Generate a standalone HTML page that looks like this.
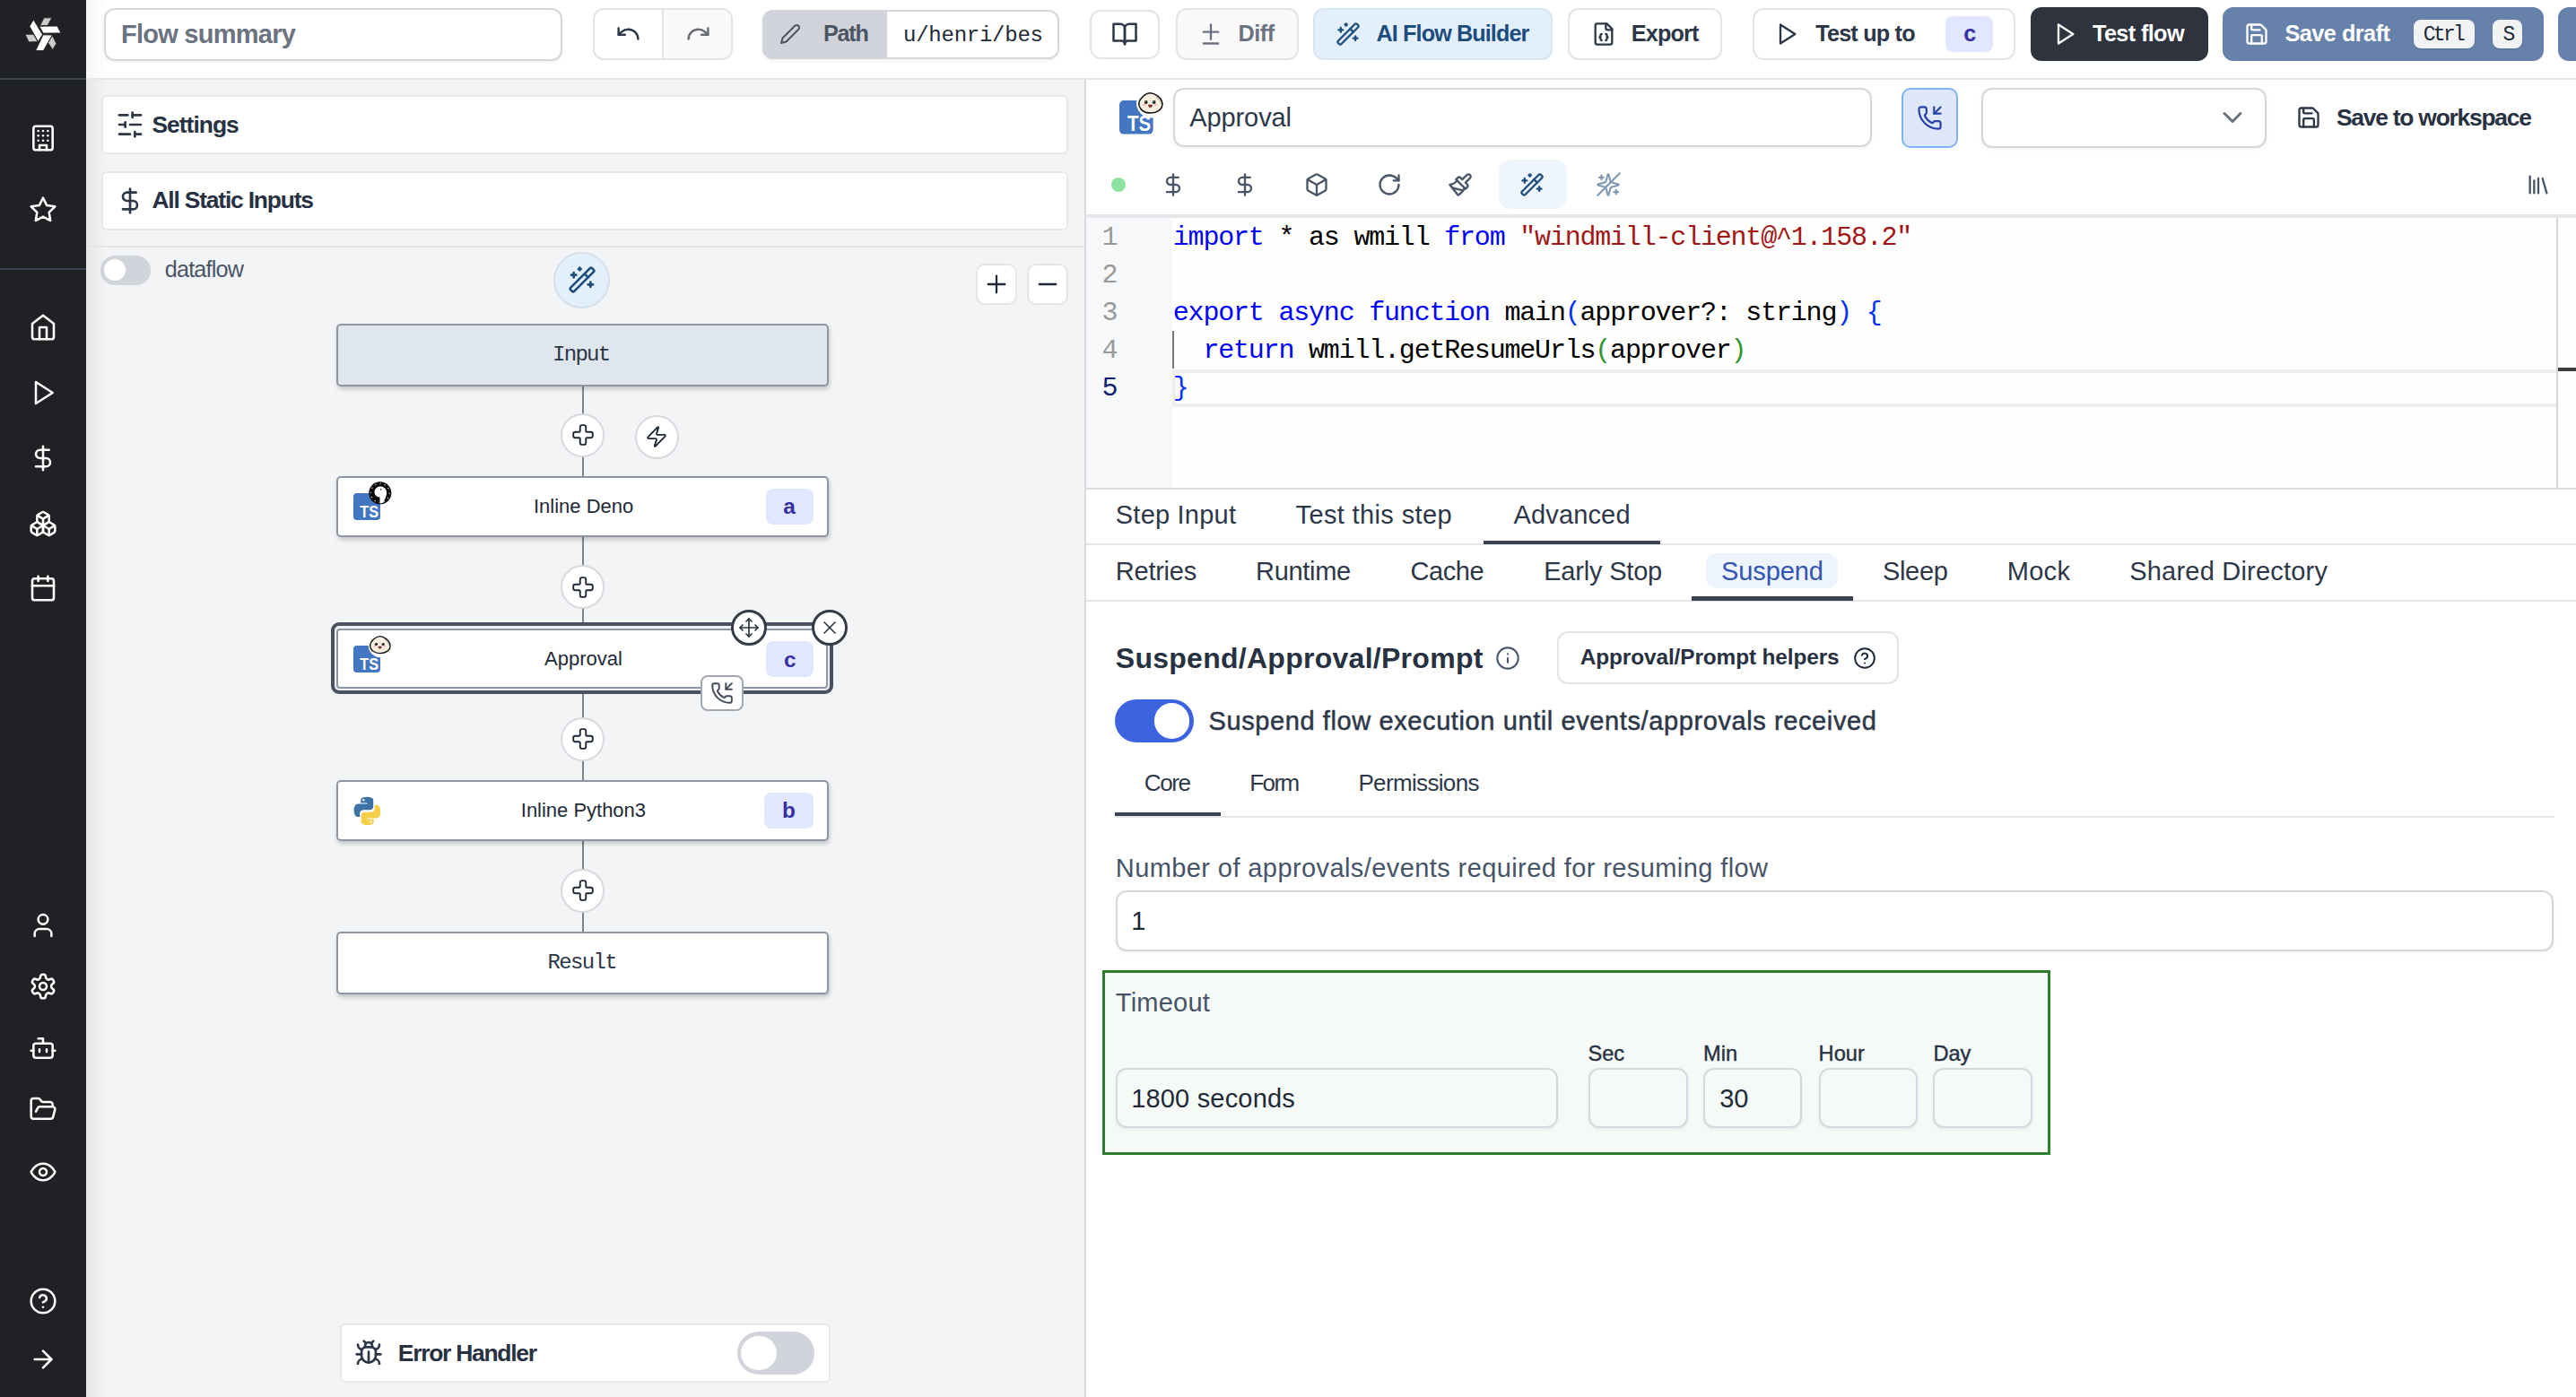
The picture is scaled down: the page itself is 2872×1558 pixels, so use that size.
<!DOCTYPE html>
<html><head><meta charset="utf-8"><title>Flow editor</title>
<style>
html,body{margin:0;padding:0;width:2872px;height:1558px;overflow:hidden;background:#fff}
.b,.t,.i,.r{position:absolute;box-sizing:border-box}
.t{white-space:pre}
.i{overflow:visible}
@media (max-width:2000px){html{zoom:0.5}}
</style></head><body>
<div class="b" style="left:0.00px;top:0.00px;width:2872.00px;height:1558.00px;background:#fff"></div>
<div class="b" style="left:96.00px;top:88.00px;width:1113.00px;height:1470.00px;background:#f3f4f6"></div>
<div class="b" style="left:1209.00px;top:88.00px;width:2.00px;height:1470.00px;background:#d9dbe0"></div>
<div class="b" style="left:96.00px;top:88.00px;width:24.00px;height:1470.00px;background:linear-gradient(to right, rgba(0,0,0,.055), rgba(0,0,0,0))"></div>
<div class="b" style="left:96.00px;top:0.00px;width:24.00px;height:87.00px;background:linear-gradient(to right, rgba(0,0,0,.035), rgba(0,0,0,0))"></div>
<div class="b" style="left:0.00px;top:0.00px;width:96.00px;height:1558.00px;background:#202125"></div>
<div class="b" style="left:0.00px;top:87.00px;width:96.00px;height:2.00px;background:#3a4352"></div>
<div class="b" style="left:0.00px;top:299.00px;width:96.00px;height:2.00px;background:#3a4352"></div>
<svg class="i" style="left:0;top:0;width:96.00px;height:88.00px" viewBox="0 0 48 44">
<g stroke="#202125" stroke-width="0.45" stroke-linejoin="miter">
<polygon fill="#cbcbcb" points="13.95,19.1 18.7,19.1 21.12,23.29 16.04,23.45"/>
<polygon fill="#cbcbcb" points="24.5,9.92 28.93,9.92 26.51,14.27 22.24,14.35"/>
<polygon fill="#cbcbcb" points="29.17,19.74 31.43,24.26 29.33,27.8 26.76,23.77"/>
<polygon fill="#ffffff" points="18.7,10.96 16.44,14.67 21.28,23.21 23.69,19.26"/>
<polygon fill="#ffffff" points="21.92,14.59 31.91,14.51 34.0,18.46 24.02,18.54"/>
<polygon fill="#ffffff" points="24.02,19.42 29.17,19.5 24.18,28.28 19.83,28.28"/>
</g></svg>
<svg class="i" style="left:32.00px;top:137.70px;width:32.00px;height:32.00px;" viewBox="0 0 24 24" fill="none" stroke="#ffffff" stroke-width="1.9" stroke-linecap="round" stroke-linejoin="round"><rect width="16" height="20" x="4" y="2" rx="2" ry="2"/><path d="M9 22v-4h6v4"/><path d="M8 6h.01"/><path d="M16 6h.01"/><path d="M12 6h.01"/><path d="M12 10h.01"/><path d="M12 14h.01"/><path d="M16 10h.01"/><path d="M16 14h.01"/><path d="M8 10h.01"/><path d="M8 14h.01"/></svg>
<svg class="i" style="left:32.00px;top:218.00px;width:32.00px;height:32.00px;" viewBox="0 0 24 24" fill="none" stroke="#ffffff" stroke-width="1.9" stroke-linecap="round" stroke-linejoin="round"><polygon points="12 2 15.09 8.26 22 9.27 17 14.14 18.18 21.02 12 17.77 5.82 21.02 7 14.14 2 9.27 8.91 8.26 12 2"/></svg>
<svg class="i" style="left:32.00px;top:349.00px;width:32.00px;height:32.00px;" viewBox="0 0 24 24" fill="none" stroke="#ffffff" stroke-width="1.9" stroke-linecap="round" stroke-linejoin="round"><path d="m3 9 9-7 9 7v11a2 2 0 0 1-2 2H5a2 2 0 0 1-2-2z"/><polyline points="9 22 9 12 15 12 15 22"/></svg>
<svg class="i" style="left:32.00px;top:422.00px;width:32.00px;height:32.00px;" viewBox="0 0 24 24" fill="none" stroke="#ffffff" stroke-width="1.9" stroke-linecap="round" stroke-linejoin="round"><polygon points="6 3 20 12 6 21 6 3"/></svg>
<svg class="i" style="left:32.00px;top:495.40px;width:32.00px;height:32.00px;" viewBox="0 0 24 24" fill="none" stroke="#ffffff" stroke-width="1.9" stroke-linecap="round" stroke-linejoin="round"><line x1="12" x2="12" y1="2" y2="22"/><path d="M17 5H9.5a3.5 3.5 0 0 0 0 7h5a3.5 3.5 0 0 1 0 7H6"/></svg>
<svg class="i" style="left:32.00px;top:568.00px;width:32.00px;height:32.00px;" viewBox="0 0 24 24" fill="none" stroke="#ffffff" stroke-width="1.9" stroke-linecap="round" stroke-linejoin="round"><path d="M2.97 12.92A2 2 0 0 0 2 14.63v3.24a2 2 0 0 0 .97 1.71l3 1.8a2 2 0 0 0 2.06 0L12 19v-5.5l-5-3-4.03 2.42Z"/><path d="m7 16.5-4.74-2.85"/><path d="m7 16.5 5-3"/><path d="M7 16.5v5.17"/><path d="M12 13.5V19l3.97 2.38a2 2 0 0 0 2.06 0l3-1.8a2 2 0 0 0 .97-1.71v-3.24a2 2 0 0 0-.97-1.71L17 10.5l-5 3Z"/><path d="m17 16.5-5-3"/><path d="m17 16.5 4.74-2.85"/><path d="M17 16.5v5.17"/><path d="M7.97 4.42A2 2 0 0 0 7 6.13v4.37l5 3 5-3V6.13a2 2 0 0 0-.97-1.71l-3-1.8a2 2 0 0 0-2.06 0l-3 1.8Z"/><path d="M12 8 7.26 5.15"/><path d="m12 8 4.74-2.85"/><path d="M12 13.5V8"/></svg>
<svg class="i" style="left:32.00px;top:640.00px;width:32.00px;height:32.00px;" viewBox="0 0 24 24" fill="none" stroke="#ffffff" stroke-width="1.9" stroke-linecap="round" stroke-linejoin="round"><rect width="18" height="18" x="3" y="4" rx="2" ry="2"/><line x1="16" x2="16" y1="2" y2="6"/><line x1="8" x2="8" y1="2" y2="6"/><line x1="3" x2="21" y1="10" y2="10"/></svg>
<svg class="i" style="left:32.00px;top:1016.40px;width:32.00px;height:32.00px;" viewBox="0 0 24 24" fill="none" stroke="#ffffff" stroke-width="1.9" stroke-linecap="round" stroke-linejoin="round"><path d="M19 21v-2a4 4 0 0 0-4-4H9a4 4 0 0 0-4 4v2"/><circle cx="12" cy="7" r="4"/></svg>
<svg class="i" style="left:32.00px;top:1084.40px;width:32.00px;height:32.00px;" viewBox="0 0 24 24" fill="none" stroke="#ffffff" stroke-width="1.9" stroke-linecap="round" stroke-linejoin="round"><path d="M12.22 2h-.44a2 2 0 0 0-2 2v.18a2 2 0 0 1-1 1.73l-.43.25a2 2 0 0 1-2 0l-.15-.08a2 2 0 0 0-2.73.73l-.22.38a2 2 0 0 0 .73 2.73l.15.1a2 2 0 0 1 1 1.72v.51a2 2 0 0 1-1 1.74l-.15.09a2 2 0 0 0-.73 2.73l.22.38a2 2 0 0 0 2.73.73l.15-.08a2 2 0 0 1 2 0l.43.25a2 2 0 0 1 1 1.73V20a2 2 0 0 0 2 2h.44a2 2 0 0 0 2-2v-.18a2 2 0 0 1 1-1.73l.43-.25a2 2 0 0 1 2 0l.15.08a2 2 0 0 0 2.73-.73l.22-.39a2 2 0 0 0-.73-2.73l-.15-.08a2 2 0 0 1-1-1.74v-.5a2 2 0 0 1 1-1.74l.15-.09a2 2 0 0 0 .73-2.73l-.22-.38a2 2 0 0 0-2.73-.73l-.15.08a2 2 0 0 1-2 0l-.43-.25a2 2 0 0 1-1-1.73V4a2 2 0 0 0-2-2z"/><circle cx="12" cy="12" r="3"/></svg>
<svg class="i" style="left:32.00px;top:1153.40px;width:32.00px;height:32.00px;" viewBox="0 0 24 24" fill="none" stroke="#ffffff" stroke-width="1.9" stroke-linecap="round" stroke-linejoin="round"><path d="M12 8V4H8"/><rect width="16" height="12" x="4" y="8" rx="2"/><path d="M2 14h2"/><path d="M20 14h2"/><path d="M15 13v2"/><path d="M9 13v2"/></svg>
<svg class="i" style="left:32.00px;top:1221.40px;width:32.00px;height:32.00px;" viewBox="0 0 24 24" fill="none" stroke="#ffffff" stroke-width="1.9" stroke-linecap="round" stroke-linejoin="round"><path d="m6 14 1.5-2.9A2 2 0 0 1 9.24 10H20a2 2 0 0 1 1.94 2.5l-1.54 6a2 2 0 0 1-1.95 1.5H4a2 2 0 0 1-2-2V5a2 2 0 0 1 2-2h3.9a2 2 0 0 1 1.69.9l.81 1.2a2 2 0 0 0 1.67.9H18a2 2 0 0 1 2 2v2"/></svg>
<svg class="i" style="left:32.00px;top:1290.60px;width:32.00px;height:32.00px;" viewBox="0 0 24 24" fill="none" stroke="#ffffff" stroke-width="1.9" stroke-linecap="round" stroke-linejoin="round"><path d="M2 12s3-7 10-7 10 7 10 7-3 7-10 7-10-7-10-7Z"/><circle cx="12" cy="12" r="3"/></svg>
<svg class="i" style="left:32.00px;top:1435.40px;width:32.00px;height:32.00px;" viewBox="0 0 24 24" fill="none" stroke="#ffffff" stroke-width="1.9" stroke-linecap="round" stroke-linejoin="round"><circle cx="12" cy="12" r="10"/><path d="M9.09 9a3 3 0 0 1 5.83 1c0 2-3 3-3 3"/><path d="M12 17h.01"/></svg>
<svg class="i" style="left:32.00px;top:1500.00px;width:32.00px;height:32.00px;" viewBox="0 0 24 24" fill="none" stroke="#ffffff" stroke-width="1.9" stroke-linecap="round" stroke-linejoin="round"><path d="M5 12h14"/><path d="m12 5 7 7-7 7"/></svg>
<div class="b" style="left:96.00px;top:87.00px;width:2776.00px;height:2.00px;background:#e5e7eb"></div>
<div class="b" style="left:116.00px;top:8.80px;width:510.80px;height:59.20px;border:2.00px solid #d4d7dd;border-radius:12.00px;background:#fff;box-shadow:0 2.00px 4.00px rgba(0,0,0,.05)"></div>
<div class="t" style="left:135.00px;top:23.65px;font-size:29.00px;line-height:29.00px;color:#6b7280;font-family:'Liberation Sans', sans-serif;font-weight:700;letter-spacing:-0.748px;">Flow summary</div>
<div class="b" style="left:660.80px;top:8.80px;width:156.20px;height:58.70px;border:2.00px solid #e2e4e9;border-radius:12.00px;background:#fff;overflow:hidden"></div>
<div class="b" style="left:738.80px;top:10.80px;width:76.20px;height:54.70px;background:#fafafa;border-radius:0 10.00px 10.00px 0"></div>
<div class="b" style="left:738.00px;top:8.80px;width:2.00px;height:58.70px;background:#e2e4e9"></div>
<svg class="i" style="left:685.50px;top:23.30px;width:29.00px;height:29.00px;" viewBox="0 0 24 24" fill="none" stroke="#2d3748" stroke-width="2" stroke-linecap="round" stroke-linejoin="round"><path d="M3 7v6h6"/><path d="M21 17a9 9 0 0 0-9-9 9 9 0 0 0-6 2.3L3 13"/></svg>
<svg class="i" style="left:763.50px;top:23.30px;width:29.00px;height:29.00px;" viewBox="0 0 24 24" fill="none" stroke="#666b73" stroke-width="2" stroke-linecap="round" stroke-linejoin="round"><path d="M21 7v6h-6"/><path d="M3 17a9 9 0 0 1 9-9 9 9 0 0 1 6 2.3l3 2.7"/></svg>
<div class="b" style="left:850.00px;top:10.50px;width:330.80px;height:55.50px;border:2.00px solid #d4d7dd;border-radius:12.00px;background:#fff;box-shadow:0 2.00px 4.00px rgba(0,0,0,.05)"></div>
<div class="b" style="left:850.00px;top:10.50px;width:139.20px;height:55.50px;background:#d1d5db;border-radius:12.00px 0 0 12.00px"></div>
<svg class="i" style="left:869.20px;top:25.80px;width:24.00px;height:24.00px;" viewBox="0 0 24 24" fill="none" stroke="#4b5563" stroke-width="2" stroke-linecap="round" stroke-linejoin="round"><path d="M17 3a2.85 2.83 0 1 1 4 4L7.5 20.5 2 22l1.5-5.5Z"/></svg>
<div class="t" style="left:918.00px;top:24.87px;font-size:25.20px;line-height:25.20px;color:#4b5563;font-family:'Liberation Sans', sans-serif;font-weight:700;letter-spacing:-1.272px;">Path</div>
<div class="t" style="left:1007.00px;top:27.80px;font-size:24.00px;line-height:24.00px;color:#1f2937;font-family:'Liberation Mono', monospace;font-weight:400;letter-spacing:-0.243px;">u/henri/bes</div>
<div class="b" style="left:1214.50px;top:10.50px;width:78.50px;height:55.30px;border:2.00px solid #e2e4e9;border-radius:12.00px;background:#fff"></div>
<svg class="i" style="left:1238.80px;top:22.80px;width:30.00px;height:30.00px;" viewBox="0 0 24 24" fill="none" stroke="#2d3748" stroke-width="2" stroke-linecap="round" stroke-linejoin="round"><path d="M2 3h6a4 4 0 0 1 4 4v14a3 3 0 0 0-3-3H2z"/><path d="M22 3h-6a4 4 0 0 0-4 4v14a3 3 0 0 1 3-3h7z"/></svg>
<div class="b" style="left:1310.50px;top:8.80px;width:137.00px;height:58.70px;border:2.00px solid #e2e4e9;border-radius:12.00px;background:#f9f9fa"></div>
<svg class="i" style="left:1336.00px;top:23.80px;width:28.00px;height:28.00px;" viewBox="0 0 24 24" fill="none" stroke="#6b7280" stroke-width="2" stroke-linecap="round" stroke-linejoin="round"><path d="M12 3v14"/><path d="M5 10h14"/><path d="M5 21h14"/></svg>
<div class="t" style="left:1380.50px;top:24.87px;font-size:25.20px;line-height:25.20px;color:#6b7280;font-family:'Liberation Sans', sans-serif;font-weight:700;letter-spacing:-0.464px;">Diff</div>
<div class="b" style="left:1464.00px;top:8.80px;width:267.20px;height:58.70px;border:2.00px solid #d6e6f5;border-radius:12.00px;background:#e3f0fc"></div>
<svg class="i" style="left:1489.20px;top:23.80px;width:28.00px;height:28.00px;" viewBox="0 0 24 24" fill="none" stroke="#1e4c7c" stroke-width="2" stroke-linecap="round" stroke-linejoin="round"><path d="m21.64 3.64-1.28-1.28a1.21 1.21 0 0 0-1.72 0L2.36 18.64a1.21 1.21 0 0 0 0 1.72l1.28 1.28a1.2 1.2 0 0 0 1.72 0L21.64 5.36a1.2 1.2 0 0 0 0-1.72"/><path d="m14 7 3 3"/><path d="M5 6v4"/><path d="M19 14v4"/><path d="M10 2v2"/><path d="M7 8H3"/><path d="M21 16h-4"/><path d="M11 3H9"/></svg>
<div class="t" style="left:1534.50px;top:24.87px;font-size:25.20px;line-height:25.20px;color:#1e4c7c;font-family:'Liberation Sans', sans-serif;font-weight:700;letter-spacing:-0.886px;">AI Flow Builder</div>
<div class="b" style="left:1748.00px;top:8.80px;width:172.00px;height:58.70px;border:2.00px solid #e2e4e9;border-radius:12.00px;background:#fff"></div>
<svg class="i" style="left:1774.00px;top:23.80px;width:28.00px;height:28.00px;" viewBox="0 0 24 24" fill="none" stroke="#2d3748" stroke-width="2" stroke-linecap="round" stroke-linejoin="round"><path d="M15 2H6a2 2 0 0 0-2 2v16a2 2 0 0 0 2 2h12a2 2 0 0 0 2-2V7Z"/><path d="M14 2v4a2 2 0 0 0 2 2h4"/><path d="M10 12a1 1 0 0 0-1 1v1a1 1 0 0 1-1 1 1 1 0 0 1 1 1v1a1 1 0 0 0 1 1"/><path d="M14 18a1 1 0 0 0 1-1v-1a1 1 0 0 1 1-1 1 1 0 0 1-1-1v-1a1 1 0 0 0-1-1"/></svg>
<div class="t" style="left:1818.80px;top:24.87px;font-size:25.20px;line-height:25.20px;color:#2d3748;font-family:'Liberation Sans', sans-serif;font-weight:700;letter-spacing:-0.823px;">Export</div>
<div class="b" style="left:1953.80px;top:8.80px;width:293.70px;height:58.70px;border:2.00px solid #e2e4e9;border-radius:12.00px;background:#fff"></div>
<svg class="i" style="left:1978.00px;top:23.80px;width:28.00px;height:28.00px;" viewBox="0 0 24 24" fill="none" stroke="#2d3748" stroke-width="2" stroke-linecap="round" stroke-linejoin="round"><polygon points="6 3 20 12 6 21 6 3"/></svg>
<div class="t" style="left:2024.20px;top:24.87px;font-size:25.20px;line-height:25.20px;color:#2d3748;font-family:'Liberation Sans', sans-serif;font-weight:700;letter-spacing:-0.789px;">Test up to</div>
<div class="b" style="left:2169.20px;top:18.00px;width:52.60px;height:40.00px;background:#e0e7ff;border-radius:8.00px"></div>
<div class="t" style="left:2189.20px;top:24.87px;font-size:25.20px;line-height:25.20px;color:#3730a3;font-family:'Liberation Sans', sans-serif;font-weight:700;letter-spacing:0.000px;">c</div>
<div class="b" style="left:2264.00px;top:8.00px;width:197.80px;height:60.00px;background:#2e333e;border-radius:12.00px"></div>
<svg class="i" style="left:2287.80px;top:23.80px;width:28.00px;height:28.00px;" viewBox="0 0 24 24" fill="none" stroke="#ffffff" stroke-width="2" stroke-linecap="round" stroke-linejoin="round"><polygon points="6 3 20 12 6 21 6 3"/></svg>
<div class="t" style="left:2333.00px;top:24.87px;font-size:25.20px;line-height:25.20px;color:#ffffff;font-family:'Liberation Sans', sans-serif;font-weight:700;letter-spacing:-0.601px;">Test flow</div>
<div class="b" style="left:2478.00px;top:8.00px;width:357.50px;height:60.00px;background:#6681aa;border-radius:12.00px"></div>
<svg class="i" style="left:2501.50px;top:23.80px;width:28.00px;height:28.00px;" viewBox="0 0 24 24" fill="none" stroke="#ffffff" stroke-width="2" stroke-linecap="round" stroke-linejoin="round"><path d="M15.2 3a2 2 0 0 1 1.4.6l3.8 3.8a2 2 0 0 1 .6 1.4V19a2 2 0 0 1-2 2H5a2 2 0 0 1-2-2V5a2 2 0 0 1 2-2z"/><path d="M17 21v-7a1 1 0 0 0-1-1H8a1 1 0 0 0-1 1v7"/><path d="M7 3v4a1 1 0 0 0 1 1h7"/></svg>
<div class="t" style="left:2547.50px;top:24.87px;font-size:25.20px;line-height:25.20px;color:#ffffff;font-family:'Liberation Sans', sans-serif;font-weight:700;letter-spacing:-0.485px;">Save draft</div>
<div class="b" style="left:2691.00px;top:22.00px;width:67.80px;height:32.00px;background:#f1f2f4;border-radius:8.00px;box-shadow:0 1.00px 2.00px rgba(0,0,0,.15)"></div>
<div class="t" style="left:2701.80px;top:28.37px;font-size:23.00px;line-height:23.00px;color:#1f2937;font-family:'Liberation Mono', monospace;font-weight:400;letter-spacing:-2.735px;">Ctrl</div>
<div class="b" style="left:2778.80px;top:22.00px;width:33.00px;height:32.00px;background:#f1f2f4;border-radius:8.00px;box-shadow:0 1.00px 2.00px rgba(0,0,0,.15)"></div>
<div class="t" style="left:2790.50px;top:28.37px;font-size:23.00px;line-height:23.00px;color:#1f2937;font-family:'Liberation Mono', monospace;font-weight:400;letter-spacing:0.000px;">S</div>
<div class="b" style="left:2852.00px;top:8.00px;width:40.00px;height:60.00px;background:#6681aa;border-radius:12.00px"></div>
<div class="b" style="left:113.00px;top:106.20px;width:1078.00px;height:65.80px;background:#fff;border:2.00px solid #e5e7eb;border-radius:6.00px"></div>
<svg class="i" style="left:129.20px;top:123.40px;width:32.00px;height:32.00px;" viewBox="0 0 24 24" fill="none" stroke="#2d3748" stroke-width="2" stroke-linecap="round" stroke-linejoin="round"><line x1="21" x2="14" y1="4" y2="4"/><line x1="10" x2="3" y1="4" y2="4"/><line x1="21" x2="12" y1="12" y2="12"/><line x1="8" x2="3" y1="12" y2="12"/><line x1="21" x2="16" y1="20" y2="20"/><line x1="12" x2="3" y1="20" y2="20"/><line x1="14" x2="14" y1="2" y2="6"/><line x1="8" x2="8" y1="10" y2="14"/><line x1="16" x2="16" y1="18" y2="22"/></svg>
<div class="t" style="left:169.50px;top:125.65px;font-size:26.40px;line-height:26.40px;color:#283141;font-family:'Liberation Sans', sans-serif;font-weight:700;letter-spacing:-0.981px;">Settings</div>
<div class="b" style="left:113.00px;top:190.50px;width:1078.00px;height:66.30px;background:#fff;border:2.00px solid #e5e7eb;border-radius:6.00px"></div>
<svg class="i" style="left:128.80px;top:207.60px;width:32.00px;height:32.00px;" viewBox="0 0 24 24" fill="none" stroke="#2d3748" stroke-width="2" stroke-linecap="round" stroke-linejoin="round"><line x1="12" x2="12" y1="2" y2="22"/><path d="M17 5H9.5a3.5 3.5 0 0 0 0 7h5a3.5 3.5 0 0 1 0 7H6"/></svg>
<div class="t" style="left:169.50px;top:210.15px;font-size:26.40px;line-height:26.40px;color:#283141;font-family:'Liberation Sans', sans-serif;font-weight:700;letter-spacing:-1.188px;">All Static Inputs</div>
<div class="b" style="left:96.00px;top:274.00px;width:1113.00px;height:2.00px;background:#e3e5e9"></div>
<div class="b" style="left:112.00px;top:285.00px;width:55.50px;height:32.50px;background:#d1d5db;border-radius:16.00px"></div>
<div class="b" style="left:116.40px;top:289.20px;width:24.00px;height:24.00px;background:#fff;border-radius:50%"></div>
<div class="t" style="left:183.80px;top:288.17px;font-size:25.20px;line-height:25.20px;color:#4a5568;font-family:'Liberation Sans', sans-serif;font-weight:400;letter-spacing:-0.823px;">dataflow</div>
<div class="b" style="left:617.00px;top:280.50px;width:63.00px;height:63.00px;background:#e3f0fc;border:2.00px solid #d5e0ea;border-radius:50%"></div>
<svg class="i" style="left:632.50px;top:296.00px;width:32.00px;height:32.00px;" viewBox="0 0 24 24" fill="none" stroke="#1e4c7c" stroke-width="2" stroke-linecap="round" stroke-linejoin="round"><path d="m21.64 3.64-1.28-1.28a1.21 1.21 0 0 0-1.72 0L2.36 18.64a1.21 1.21 0 0 0 0 1.72l1.28 1.28a1.2 1.2 0 0 0 1.72 0L21.64 5.36a1.2 1.2 0 0 0 0-1.72"/><path d="m14 7 3 3"/><path d="M5 6v4"/><path d="M19 14v4"/><path d="M10 2v2"/><path d="M7 8H3"/><path d="M21 16h-4"/><path d="M11 3H9"/></svg>
<div class="b" style="left:1088.00px;top:293.80px;width:45.80px;height:46.20px;background:#fff;border:2.00px solid #e3e5e9;border-radius:10.00px"></div>
<svg class="i" style="left:1094.90px;top:300.90px;width:32.00px;height:32.00px;" viewBox="0 0 24 24" fill="none" stroke="#1f2937" stroke-width="1.7" stroke-linecap="round" stroke-linejoin="round"><path d="M5 12h14"/><path d="M12 5v14"/></svg>
<div class="b" style="left:1144.80px;top:293.80px;width:46.20px;height:46.20px;background:#fff;border:2.00px solid #e3e5e9;border-radius:10.00px"></div>
<svg class="i" style="left:1151.90px;top:300.90px;width:32.00px;height:32.00px;" viewBox="0 0 24 24" fill="none" stroke="#1f2937" stroke-width="1.7" stroke-linecap="round" stroke-linejoin="round"><path d="M5 12h14"/></svg>
<div class="b" style="left:649.00px;top:430.00px;width:2.00px;height:609.00px;background:#7d838c"></div>
<div class="b" style="left:374.80px;top:360.50px;width:549.60px;height:70.10px;background:#fff;border:2.00px solid #8f96a3;border-radius:5.00px;box-shadow:1.00px 3.00px 5.00px rgba(0,0,0,.2);background:#dfe6ee"></div>
<div class="t" style="left:616.00px;top:384.10px;font-size:24.00px;line-height:24.00px;color:#2d3748;font-family:'Liberation Mono', monospace;font-weight:400;letter-spacing:-1.703px;">Input</div>
<div class="b" style="left:625.30px;top:460.50px;width:49.00px;height:49.00px;background:#fff;border:2.00px solid #d6d9de;border-radius:50%"></div>
<svg class="i" style="left:636.80px;top:472.00px;width:26.00px;height:26.00px;" viewBox="0 0 24 24" fill="none" stroke="#1f2937" stroke-width="1.75" stroke-linecap="round" stroke-linejoin="round"><path d="M4 9a2 2 0 0 0-2 2v2a2 2 0 0 0 2 2h4a1 1 0 0 1 1 1v4a2 2 0 0 0 2 2h2a2 2 0 0 0 2-2v-4a1 1 0 0 1 1-1h4a2 2 0 0 0 2-2v-2a2 2 0 0 0-2-2h-4a1 1 0 0 1-1-1V4a2 2 0 0 0-2-2h-2a2 2 0 0 0-2 2v4a1 1 0 0 1-1 1z"/></svg>
<div class="b" style="left:707.90px;top:462.70px;width:49.00px;height:49.00px;background:#fff;border:2.00px solid #d6d9de;border-radius:50%"></div>
<svg class="i" style="left:719.40px;top:474.20px;width:26.00px;height:26.00px;" viewBox="0 0 24 24" fill="none" stroke="#1f2937" stroke-width="1.75" stroke-linecap="round" stroke-linejoin="round"><path d="M4 14a1 1 0 0 1-.78-1.63l9.9-10.2a.5.5 0 0 1 .86.46l-1.92 6.02A1 1 0 0 0 13 10h7a1 1 0 0 1 .78 1.63l-9.9 10.2a.5.5 0 0 1-.86-.46l1.92-6.02A1 1 0 0 0 11 14z"/></svg>
<div class="b" style="left:374.80px;top:530.50px;width:549.60px;height:68.90px;background:#fff;border:2.00px solid #8f96a3;border-radius:5.00px;box-shadow:1.00px 3.00px 5.00px rgba(0,0,0,.2)"></div>
<svg class="i" style="left:394.00px;top:550.00px;width:30.00px;height:30.00px" viewBox="0 0 15 15"><rect width="15" height="15" rx="1.9" fill="#4377c2"/><text x="3.6" y="13.7" font-family="'Liberation Sans',sans-serif" font-weight="700" font-size="9.6" fill="#fff" textLength="10.4" lengthAdjust="spacingAndGlyphs">TS</text></svg>
<svg class="i" style="left:411.10px;top:536.90px;width:25.60px;height:25.60px" viewBox="0 0 20 20"><circle cx="10" cy="10" r="9.8" fill="#0a0a0a"/><line x1="17.80" y1="10.00" x2="18.54" y2="11.03" stroke="#fff" stroke-width=".7"/><line x1="16.77" y1="13.88" x2="16.90" y2="15.14" stroke="#fff" stroke-width=".7"/><line x1="13.95" y1="16.73" x2="13.43" y2="17.88" stroke="#fff" stroke-width=".7"/><line x1="10.08" y1="17.80" x2="9.06" y2="18.55" stroke="#fff" stroke-width=".7"/><line x1="6.20" y1="16.81" x2="4.94" y2="16.95" stroke="#fff" stroke-width=".7"/><line x1="3.32" y1="14.02" x2="2.15" y2="13.52" stroke="#fff" stroke-width=".7"/><line x1="2.20" y1="10.17" x2="1.44" y2="9.16" stroke="#fff" stroke-width=".7"/><line x1="3.15" y1="6.27" x2="2.99" y2="5.01" stroke="#fff" stroke-width=".7"/><line x1="5.91" y1="3.36" x2="6.40" y2="2.19" stroke="#fff" stroke-width=".7"/><line x1="9.75" y1="2.20" x2="10.75" y2="1.43" stroke="#fff" stroke-width=".7"/><line x1="13.65" y1="3.11" x2="14.91" y2="2.94" stroke="#fff" stroke-width=".7"/><line x1="16.60" y1="5.84" x2="17.77" y2="6.31" stroke="#fff" stroke-width=".7"/><path d="M10.3 4.3c3 0 5.4 2.3 5.4 5.4 0 2.5-1 4.6-2 6.5l-1 2.3-2.7.6-.4-5.6C7.2 13.6 5.1 12 5.1 9.2c0-2.9 2.2-4.9 5.2-4.9z" fill="#fff"/><circle cx="10.7" cy="7" r=".65" fill="#111"/></svg>
<div class="t" style="left:595.00px;top:553.78px;font-size:22.00px;line-height:22.00px;color:#1f2937;font-family:'Liberation Sans', sans-serif;font-weight:400;letter-spacing:-0.007px;">Inline Deno</div>
<div class="b" style="left:853.80px;top:544.50px;width:53.00px;height:40.70px;background:#e0e7ff;border-radius:8.00px"></div>
<div class="t" style="left:873.20px;top:553.35px;font-size:24.40px;line-height:24.40px;color:#3730a3;font-family:'Liberation Sans', sans-serif;font-weight:700;letter-spacing:0.000px;">a</div>
<div class="b" style="left:625.30px;top:630.10px;width:49.00px;height:49.00px;background:#fff;border:2.00px solid #d6d9de;border-radius:50%"></div>
<svg class="i" style="left:636.80px;top:641.60px;width:26.00px;height:26.00px;" viewBox="0 0 24 24" fill="none" stroke="#1f2937" stroke-width="1.75" stroke-linecap="round" stroke-linejoin="round"><path d="M4 9a2 2 0 0 0-2 2v2a2 2 0 0 0 2 2h4a1 1 0 0 1 1 1v4a2 2 0 0 0 2 2h2a2 2 0 0 0 2-2v-4a1 1 0 0 1 1-1h4a2 2 0 0 0 2-2v-2a2 2 0 0 0-2-2h-4a1 1 0 0 1-1-1V4a2 2 0 0 0-2-2h-2a2 2 0 0 0-2 2v4a1 1 0 0 1-1 1z"/></svg>
<div class="b" style="left:369.20px;top:694.20px;width:560.30px;height:80.30px;border:4.00px solid #4a5160;border-radius:9.00px;background:#eef0f3"></div>
<div class="b" style="left:375.00px;top:700.50px;width:548.00px;height:67.70px;background:#fff;border:2.00px solid #8f96a3;border-radius:4.00px"></div>
<svg class="i" style="left:394.00px;top:719.50px;width:30.00px;height:30.00px" viewBox="0 0 15 15"><rect width="15" height="15" rx="1.9" fill="#4377c2"/><circle cx="15" cy="0" r="6.6" fill="#fff"/><text x="3.6" y="13.7" font-family="'Liberation Sans',sans-serif" font-weight="700" font-size="9.6" fill="#fff" textLength="10.4" lengthAdjust="spacingAndGlyphs">TS</text></svg>
<svg class="i" style="left:412.00px;top:708.69px;width:23.60px;height:20.23px" viewBox="0 0 28 24"><path d="M13.6 0.8 C18.5 0.8 26.8 6 27.3 13 C27.6 19.5 21 23.3 14 23.3 C7 23.3 0.8 19.5 0.8 12.8 C0.8 7.5 8.5 0.8 13.6 0.8 Z" fill="#f8efdf" stroke="#111" stroke-width="1.6"/><path d="M20 5c3 2 5.5 5 6 8" stroke="#555" stroke-width="1" fill="none" opacity=".5"/><ellipse cx="7" cy="13.9" rx="2" ry="1" fill="#f3b6cc"/><ellipse cx="19.7" cy="13.9" rx="2" ry="1" fill="#f3b6cc"/><circle cx="8.8" cy="11.1" r="1.9" fill="#111"/><circle cx="17.9" cy="11.1" r="1.9" fill="#111"/><circle cx="8.3" cy="10.4" r=".6" fill="#fff"/><circle cx="17.4" cy="10.4" r=".6" fill="#fff"/><path d="M11.6 14.2h4.2c-.2 1.9-1 2.8-2.1 2.8s-1.9-.9-2.1-2.8z" fill="#b3262e" stroke="#111" stroke-width=".5"/></svg>
<div class="t" style="left:607.00px;top:724.38px;font-size:22.00px;line-height:22.00px;color:#1f2937;font-family:'Liberation Sans', sans-serif;font-weight:400;letter-spacing:-0.006px;">Approval</div>
<div class="b" style="left:853.80px;top:714.50px;width:53.00px;height:40.70px;background:#e0e7ff;border-radius:8.00px"></div>
<div class="t" style="left:874.00px;top:723.75px;font-size:24.40px;line-height:24.40px;color:#3730a3;font-family:'Liberation Sans', sans-serif;font-weight:700;letter-spacing:0.000px;">c</div>
<div class="b" style="left:814.80px;top:680.00px;width:40.00px;height:40.00px;background:#fff;border:3.20px solid #353b47;border-radius:50%"></div>
<svg class="i" style="left:822.80px;top:688.00px;width:24.00px;height:24.00px;" viewBox="0 0 24 24" fill="none" stroke="#2d3340" stroke-width="1.7" stroke-linecap="round" stroke-linejoin="round"><polyline points="5 9 2 12 5 15"/><polyline points="9 5 12 2 15 5"/><polyline points="15 19 12 22 9 19"/><polyline points="19 9 22 12 19 15"/><line x1="2" x2="22" y1="12" y2="12"/><line x1="12" x2="12" y1="2" y2="22"/></svg>
<div class="b" style="left:905.00px;top:680.00px;width:40.00px;height:40.00px;background:#fff;border:3.20px solid #353b47;border-radius:50%"></div>
<svg class="i" style="left:913.00px;top:688.00px;width:24.00px;height:24.00px;" viewBox="0 0 24 24" fill="none" stroke="#2d3340" stroke-width="1.6" stroke-linecap="round" stroke-linejoin="round"><path d="M18 6 6 18"/><path d="m6 6 12 12"/></svg>
<div class="b" style="left:781.40px;top:752.80px;width:47.40px;height:39.80px;background:#fff;border:2.00px solid #a2a8b2;border-radius:8.00px"></div>
<svg class="i" style="left:792.20px;top:759.80px;width:26.00px;height:26.00px;" viewBox="0 0 24 24" fill="none" stroke="#454b57" stroke-width="1.8" stroke-linecap="round" stroke-linejoin="round"><path d="M16 2v6h6"/><path d="m22 2-6 6"/><path d="M13.832 16.568a1 1 0 0 0 1.213-.303l.355-.465A2 2 0 0 1 17 15h3a2 2 0 0 1 2 2v3a2 2 0 0 1-2 2A18 18 0 0 1 2 4a2 2 0 0 1 2-2h3a2 2 0 0 1 2 2v3a2 2 0 0 1-.8 1.6l-.468.351a1 1 0 0 0-.292 1.233 14 14 0 0 0 6.392 6.384"/></svg>
<div class="b" style="left:625.30px;top:799.90px;width:49.00px;height:49.00px;background:#fff;border:2.00px solid #d6d9de;border-radius:50%"></div>
<svg class="i" style="left:636.80px;top:811.40px;width:26.00px;height:26.00px;" viewBox="0 0 24 24" fill="none" stroke="#1f2937" stroke-width="1.75" stroke-linecap="round" stroke-linejoin="round"><path d="M4 9a2 2 0 0 0-2 2v2a2 2 0 0 0 2 2h4a1 1 0 0 1 1 1v4a2 2 0 0 0 2 2h2a2 2 0 0 0 2-2v-4a1 1 0 0 1 1-1h4a2 2 0 0 0 2-2v-2a2 2 0 0 0-2-2h-4a1 1 0 0 1-1-1V4a2 2 0 0 0-2-2h-2a2 2 0 0 0-2 2v4a1 1 0 0 1-1 1z"/></svg>
<div class="b" style="left:374.80px;top:870.00px;width:549.60px;height:68.40px;background:#fff;border:2.00px solid #8f96a3;border-radius:5.00px;box-shadow:1.00px 3.00px 5.00px rgba(0,0,0,.2)"></div>
<svg class="i" style="left:392.60px;top:888.20px;width:32.88px;height:32.88px" viewBox="0 0 16 16"><path d="M7.9 0.4c-3.6 0-3.4 1.6-3.4 1.6v1.6h3.5v.5H3.1S0.8 3.8 0.8 7.6c0 3.7 2 3.6 2 3.6h1.2V9.4s-.1-2 2-2h3.4s1.9 0 1.9-1.9V2.4S11.6 0.4 7.9 0.4zM6 1.5a.6.6 0 1 1 0 1.2.6.6 0 0 1 0-1.2z" fill="#3d72a4"/><path d="M8.1 15.6c3.6 0 3.4-1.6 3.4-1.6v-1.6H8v-.5h4.9s2.3.3 2.3-3.5c0-3.7-2-3.6-2-3.6H12v1.8s.1 2-2 2H6.6s-1.9 0-1.9 1.9v3.1S4.4 15.6 8.1 15.6zM10 14.5a.6.6 0 1 1 0-1.2.6.6 0 0 1 0 1.2z" fill="#f5cf48"/></svg>
<div class="t" style="left:580.80px;top:892.78px;font-size:22.00px;line-height:22.00px;color:#1f2937;font-family:'Liberation Sans', sans-serif;font-weight:400;letter-spacing:-0.016px;">Inline Python3</div>
<div class="b" style="left:852.00px;top:883.80px;width:54.80px;height:40.40px;background:#e0e7ff;border-radius:8.00px"></div>
<div class="t" style="left:872.00px;top:892.15px;font-size:24.40px;line-height:24.40px;color:#3730a3;font-family:'Liberation Sans', sans-serif;font-weight:700;letter-spacing:0.000px;">b</div>
<div class="b" style="left:625.30px;top:968.70px;width:49.00px;height:49.00px;background:#fff;border:2.00px solid #d6d9de;border-radius:50%"></div>
<svg class="i" style="left:636.80px;top:980.20px;width:26.00px;height:26.00px;" viewBox="0 0 24 24" fill="none" stroke="#1f2937" stroke-width="1.75" stroke-linecap="round" stroke-linejoin="round"><path d="M4 9a2 2 0 0 0-2 2v2a2 2 0 0 0 2 2h4a1 1 0 0 1 1 1v4a2 2 0 0 0 2 2h2a2 2 0 0 0 2-2v-4a1 1 0 0 1 1-1h4a2 2 0 0 0 2-2v-2a2 2 0 0 0-2-2h-4a1 1 0 0 1-1-1V4a2 2 0 0 0-2-2h-2a2 2 0 0 0-2 2v4a1 1 0 0 1-1 1z"/></svg>
<div class="b" style="left:374.80px;top:1039.00px;width:549.60px;height:69.60px;background:#fff;border:2.00px solid #8f96a3;border-radius:5.00px;box-shadow:1.00px 3.00px 5.00px rgba(0,0,0,.2)"></div>
<div class="t" style="left:610.40px;top:1062.10px;font-size:24.00px;line-height:24.00px;color:#2d3748;font-family:'Liberation Mono', monospace;font-weight:400;letter-spacing:-1.643px;">Result</div>
<div class="b" style="left:378.80px;top:1476.00px;width:547.00px;height:66.40px;background:#fff;border:2.00px solid #e5e7eb;border-radius:6.00px"></div>
<svg class="i" style="left:394.80px;top:1493.00px;width:32.00px;height:32.00px;" viewBox="0 0 24 24" fill="none" stroke="#2d3748" stroke-width="2" stroke-linecap="round" stroke-linejoin="round"><path d="m8 2 1.88 1.88"/><path d="M14.12 3.88 16 2"/><path d="M9 7.13v-1a3.003 3.003 0 1 1 6 0v1"/><path d="M12 20c-3.3 0-6-2.7-6-6v-3a4 4 0 0 1 4-4h4a4 4 0 0 1 4 4v3c0 3.3-2.7 6-6 6"/><path d="M12 20v-9"/><path d="M6.53 9C4.6 8.8 3 7.1 3 5"/><path d="M6 13H2"/><path d="M3 21c0-2.1 1.7-3.9 3.8-4"/><path d="M20.97 5c0 2.1-1.6 3.8-3.5 4"/><path d="M22 13h-4"/><path d="M17.2 17c2.1.1 3.8 1.9 3.8 4"/></svg>
<div class="t" style="left:443.80px;top:1496.25px;font-size:26.40px;line-height:26.40px;color:#283141;font-family:'Liberation Sans', sans-serif;font-weight:700;letter-spacing:-1.251px;">Error Handler</div>
<div class="b" style="left:821.60px;top:1485.40px;width:86.80px;height:47.40px;background:#d1d5db;border-radius:24.00px"></div>
<div class="b" style="left:826.00px;top:1489.80px;width:40.00px;height:38.60px;background:#fff;border-radius:50%"></div>
<svg class="i" style="left:1248.20px;top:112.00px;width:37.60px;height:37.60px" viewBox="0 0 15 15"><rect width="15" height="15" rx="1.9" fill="#4377c2"/><circle cx="14.2" cy="1.2" r="6.6" fill="#fff"/><text x="3.6" y="13.7" font-family="'Liberation Sans',sans-serif" font-weight="700" font-size="9.6" fill="#fff" textLength="10.4" lengthAdjust="spacingAndGlyphs">TS</text></svg>
<svg class="i" style="left:1269.20px;top:103.17px;width:27.60px;height:23.66px" viewBox="0 0 28 24"><path d="M13.6 0.8 C18.5 0.8 26.8 6 27.3 13 C27.6 19.5 21 23.3 14 23.3 C7 23.3 0.8 19.5 0.8 12.8 C0.8 7.5 8.5 0.8 13.6 0.8 Z" fill="#f8efdf" stroke="#111" stroke-width="1.6"/><path d="M20 5c3 2 5.5 5 6 8" stroke="#555" stroke-width="1" fill="none" opacity=".5"/><ellipse cx="7" cy="13.9" rx="2" ry="1" fill="#f3b6cc"/><ellipse cx="19.7" cy="13.9" rx="2" ry="1" fill="#f3b6cc"/><circle cx="8.8" cy="11.1" r="1.9" fill="#111"/><circle cx="17.9" cy="11.1" r="1.9" fill="#111"/><circle cx="8.3" cy="10.4" r=".6" fill="#fff"/><circle cx="17.4" cy="10.4" r=".6" fill="#fff"/><path d="M11.6 14.2h4.2c-.2 1.9-1 2.8-2.1 2.8s-1.9-.9-2.1-2.8z" fill="#b3262e" stroke="#111" stroke-width=".5"/></svg>
<div class="b" style="left:1308.00px;top:98.00px;width:778.50px;height:66.00px;background:#fff;border:2.00px solid #d4d7dd;border-radius:12.00px;box-shadow:0 2.00px 4.00px rgba(0,0,0,.05)"></div>
<div class="t" style="left:1326.20px;top:116.65px;font-size:29.00px;line-height:29.00px;color:#2d3748;font-family:'Liberation Sans', sans-serif;font-weight:400;letter-spacing:-0.088px;">Approval</div>
<div class="b" style="left:2120.00px;top:97.50px;width:63.20px;height:67.00px;background:#dfe8fb;border:2.00px solid #80b2f6;border-radius:10.00px"></div>
<svg class="i" style="left:2137.10px;top:116.50px;width:29.00px;height:29.00px;" viewBox="0 0 24 24" fill="none" stroke="#2541a8" stroke-width="1.8" stroke-linecap="round" stroke-linejoin="round"><path d="M16 2v6h6"/><path d="m22 2-6 6"/><path d="M13.832 16.568a1 1 0 0 0 1.213-.303l.355-.465A2 2 0 0 1 17 15h3a2 2 0 0 1 2 2v3a2 2 0 0 1-2 2A18 18 0 0 1 2 4a2 2 0 0 1 2-2h3a2 2 0 0 1 2 2v3a2 2 0 0 1-.8 1.6l-.468.351a1 1 0 0 0-.292 1.233 14 14 0 0 0 6.392 6.384"/></svg>
<div class="b" style="left:2209.00px;top:97.50px;width:317.80px;height:67.00px;background:#fff;border:2.00px solid #d4d7dd;border-radius:12.00px;box-shadow:0 2.00px 4.00px rgba(0,0,0,.05)"></div>
<svg class="i" style="left:2470.80px;top:113.00px;width:36.00px;height:36.00px;" viewBox="0 0 24 24" fill="none" stroke="#6b7280" stroke-width="2" stroke-linecap="round" stroke-linejoin="round"><path d="m6 9 6 6 6-6"/></svg>
<svg class="i" style="left:2560.20px;top:117.20px;width:28.00px;height:28.00px;" viewBox="0 0 24 24" fill="none" stroke="#2d3748" stroke-width="2" stroke-linecap="round" stroke-linejoin="round"><path d="M15.2 3a2 2 0 0 1 1.4.6l3.8 3.8a2 2 0 0 1 .6 1.4V19a2 2 0 0 1-2 2H5a2 2 0 0 1-2-2V5a2 2 0 0 1 2-2z"/><path d="M17 21v-7a1 1 0 0 0-1-1H8a1 1 0 0 0-1 1v7"/><path d="M7 3v4a1 1 0 0 0 1 1h7"/></svg>
<div class="t" style="left:2605.00px;top:117.65px;font-size:26.40px;line-height:26.40px;color:#283141;font-family:'Liberation Sans', sans-serif;font-weight:700;letter-spacing:-1.234px;">Save to workspace</div>
<div class="b" style="left:1239.00px;top:197.80px;width:16.00px;height:16.00px;background:#8fe3a0;border-radius:50%"></div>
<div class="b" style="left:1671.20px;top:178.00px;width:75.60px;height:55.00px;background:#eef5fc;border-radius:14.00px"></div>
<svg class="i" style="left:1294.00px;top:191.80px;width:28.00px;height:28.00px;" viewBox="0 0 24 24" fill="none" stroke="#4a5568" stroke-width="2" stroke-linecap="round" stroke-linejoin="round"><line x1="12" x2="12" y1="2" y2="22"/><path d="M17 5H9.5a3.5 3.5 0 0 0 0 7h5a3.5 3.5 0 0 1 0 7H6"/></svg>
<svg class="i" style="left:1374.00px;top:191.80px;width:28.00px;height:28.00px;" viewBox="0 0 24 24" fill="none" stroke="#4a5568" stroke-width="2" stroke-linecap="round" stroke-linejoin="round"><line x1="12" x2="12" y1="2" y2="22"/><path d="M17 5H9.5a3.5 3.5 0 0 0 0 7h5a3.5 3.5 0 0 1 0 7H6"/></svg>
<svg class="i" style="left:1454.00px;top:191.80px;width:28.00px;height:28.00px;" viewBox="0 0 24 24" fill="none" stroke="#4a5568" stroke-width="2" stroke-linecap="round" stroke-linejoin="round"><path d="M21 8a2 2 0 0 0-1-1.73l-7-4a2 2 0 0 0-2 0l-7 4A2 2 0 0 0 3 8v8a2 2 0 0 0 1 1.73l7 4a2 2 0 0 0 2 0l7-4A2 2 0 0 0 21 16Z"/><path d="m3.3 7 8.7 5 8.7-5"/><path d="M12 22V12"/></svg>
<svg class="i" style="left:1535.20px;top:191.80px;width:28.00px;height:28.00px;" viewBox="0 0 24 24" fill="none" stroke="#4a5568" stroke-width="2" stroke-linecap="round" stroke-linejoin="round"><path d="M21 12a9 9 0 1 1-9-9c2.52 0 4.93 1 6.74 2.74L21 8"/><path d="M21 3v5h-5"/></svg>
<svg class="i" style="left:1614.00px;top:191.80px;width:28.00px;height:28.00px;" viewBox="0 0 24 24" fill="none" stroke="#4a5568" stroke-width="2" stroke-linecap="round" stroke-linejoin="round"><path d="M18.37 2.63 14 7l-1.59-1.59a2 2 0 0 0-2.82 0L8 7l9 9 1.59-1.59a2 2 0 0 0 0-2.82L17 10l4.37-4.37a2.12 2.12 0 1 0-3-3Z"/><path d="M9 8c-2 3-4 3.5-7 4l8 10c2-1 6-5 6-7"/><path d="M14.5 17.5 4.5 15"/></svg>
<svg class="i" style="left:1694.00px;top:191.80px;width:28.00px;height:28.00px;" viewBox="0 0 24 24" fill="none" stroke="#1e4c7c" stroke-width="2" stroke-linecap="round" stroke-linejoin="round"><path d="m21.64 3.64-1.28-1.28a1.21 1.21 0 0 0-1.72 0L2.36 18.64a1.21 1.21 0 0 0 0 1.72l1.28 1.28a1.2 1.2 0 0 0 1.72 0L21.64 5.36a1.2 1.2 0 0 0 0-1.72"/><path d="m14 7 3 3"/><path d="M5 6v4"/><path d="M19 14v4"/><path d="M10 2v2"/><path d="M7 8H3"/><path d="M21 16h-4"/><path d="M11 3H9"/></svg>
<svg class="i" style="left:1778.80px;top:191.80px;width:28.00px;height:28.00px;" viewBox="0 0 24 24" fill="none" stroke="#7f98b2" stroke-width="1.8" stroke-linecap="round" stroke-linejoin="round"><path d="M9.937 15.5A2 2 0 0 0 8.5 14.063l-6.135-1.582a.5.5 0 0 1 0-.962L8.5 9.936A2 2 0 0 0 9.937 8.5l1.582-6.135a.5.5 0 0 1 .963 0L14.063 8.5A2 2 0 0 0 15.5 9.937l6.135 1.581a.5.5 0 0 1 0 .964L15.5 14.063a2 2 0 0 0-1.437 1.437l-1.582 6.135a.5.5 0 0 1-.963 0z"/><path d="M2 22 23 1"/><path d="M5.5 3v4"/><path d="M3.5 5h4"/><path d="M19.5 17v4"/><path d="M17.5 19h4"/></svg>
<svg class="i" style="left:2816.00px;top:192.00px;width:28.00px;height:28.00px;" viewBox="0 0 24 24" fill="none" stroke="#4a5568" stroke-width="2" stroke-linecap="round" stroke-linejoin="round"><path d="m16 6 4 14"/><path d="M12 6v14"/><path d="M8 8v12"/><path d="M4 4v16"/></svg>
<div class="b" style="left:1211.00px;top:238.80px;width:1661.00px;height:4.20px;background:#e6e7eb"></div>
<div class="b" style="left:1211.00px;top:243.00px;width:1661.00px;height:301.00px;background:#fefefd"></div>
<div class="b" style="left:1211.00px;top:243.00px;width:96.00px;height:301.00px;background:#f7f8fa"></div>
<div class="b" style="left:1211.00px;top:544.00px;width:1661.00px;height:2.00px;background:#d9dbdf"></div>
<div class="b" style="left:2850.40px;top:243.00px;width:1.20px;height:301.00px;background:#d6d6d6"></div>
<div class="b" style="left:1307.00px;top:412.00px;width:1543.40px;height:42.00px;border:4.00px solid #ededed;border-right:0"></div>
<div class="b" style="left:2851.60px;top:409.60px;width:20.40px;height:4.00px;background:#3c3c3c"></div>
<div class="b" style="left:1307.00px;top:369.00px;width:1.60px;height:42.00px;background:#777"></div>
<div class="t" style="left:1228.40px;top:250.00px;font-size:30.00px;line-height:30.00px;font-family:'Liberation Mono', monospace;letter-spacing:-1.20px;color:#999999">1</div>
<div class="t" style="left:1307.80px;top:250.00px;font-size:30.00px;line-height:30.00px;font-family:'Liberation Mono', monospace;letter-spacing:-1.20px"><span style="color:#0000ff">import</span><span style="color:#000"> * as wmill </span><span style="color:#0000ff">from</span><span style="color:#000"> </span><span style="color:#a31515">"windmill-client@^1.158.2"</span></div>
<div class="t" style="left:1228.40px;top:292.00px;font-size:30.00px;line-height:30.00px;font-family:'Liberation Mono', monospace;letter-spacing:-1.20px;color:#999999">2</div>
<div class="t" style="left:1228.40px;top:334.00px;font-size:30.00px;line-height:30.00px;font-family:'Liberation Mono', monospace;letter-spacing:-1.20px;color:#999999">3</div>
<div class="t" style="left:1307.80px;top:334.00px;font-size:30.00px;line-height:30.00px;font-family:'Liberation Mono', monospace;letter-spacing:-1.20px"><span style="color:#0000ff">export</span><span style="color:#000"> </span><span style="color:#0000ff">async</span><span style="color:#000"> </span><span style="color:#0000ff">function</span><span style="color:#000"> main</span><span style="color:#0431fa">(</span><span style="color:#000">approver?: string</span><span style="color:#0431fa">)</span><span style="color:#000"> </span><span style="color:#0431fa">{</span></div>
<div class="t" style="left:1228.40px;top:376.00px;font-size:30.00px;line-height:30.00px;font-family:'Liberation Mono', monospace;letter-spacing:-1.20px;color:#999999">4</div>
<div class="t" style="left:1307.80px;top:376.00px;font-size:30.00px;line-height:30.00px;font-family:'Liberation Mono', monospace;letter-spacing:-1.20px"><span style="color:#000">  </span><span style="color:#0000ff">return</span><span style="color:#000"> wmill.getResumeUrls</span><span style="color:#319331">(</span><span style="color:#000">approver</span><span style="color:#319331">)</span></div>
<div class="t" style="left:1228.40px;top:418.00px;font-size:30.00px;line-height:30.00px;font-family:'Liberation Mono', monospace;letter-spacing:-1.20px;color:#0b216f">5</div>
<div class="t" style="left:1307.80px;top:418.00px;font-size:30.00px;line-height:30.00px;font-family:'Liberation Mono', monospace;letter-spacing:-1.20px"><span style="color:#0431fa">}</span></div>
<div class="b" style="left:1211.00px;top:606.00px;width:1661.00px;height:2.00px;background:#e3e5e9"></div>
<div class="t" style="left:1243.80px;top:560.25px;font-size:29.00px;line-height:29.00px;color:#2d3748;font-family:'Liberation Sans', sans-serif;font-weight:400;letter-spacing:0.216px;">Step Input</div>
<div class="t" style="left:1444.50px;top:560.25px;font-size:29.00px;line-height:29.00px;color:#2d3748;font-family:'Liberation Sans', sans-serif;font-weight:400;letter-spacing:0.375px;">Test this step</div>
<div class="t" style="left:1687.50px;top:560.25px;font-size:29.00px;line-height:29.00px;color:#2d3748;font-family:'Liberation Sans', sans-serif;font-weight:400;letter-spacing:0.149px;">Advanced</div>
<div class="b" style="left:1654.00px;top:602.50px;width:197.00px;height:4.50px;background:#3b4353"></div>
<div class="b" style="left:1211.00px;top:669.20px;width:1661.00px;height:2.00px;background:#e3e5e9"></div>
<div class="b" style="left:1902.00px;top:617.00px;width:147.40px;height:39.00px;background:#eef4fd;border-radius:12.00px"></div>
<div class="t" style="left:1243.80px;top:622.65px;font-size:29.00px;line-height:29.00px;color:#2d3748;font-family:'Liberation Sans', sans-serif;font-weight:400;letter-spacing:-0.243px;">Retries</div>
<div class="t" style="left:1400.00px;top:622.65px;font-size:29.00px;line-height:29.00px;color:#2d3748;font-family:'Liberation Sans', sans-serif;font-weight:400;letter-spacing:-0.293px;">Runtime</div>
<div class="t" style="left:1572.50px;top:622.65px;font-size:29.00px;line-height:29.00px;color:#2d3748;font-family:'Liberation Sans', sans-serif;font-weight:400;letter-spacing:-0.450px;">Cache</div>
<div class="t" style="left:1721.20px;top:622.65px;font-size:29.00px;line-height:29.00px;color:#2d3748;font-family:'Liberation Sans', sans-serif;font-weight:400;letter-spacing:-0.195px;">Early Stop</div>
<div class="t" style="left:1919.00px;top:622.65px;font-size:29.00px;line-height:29.00px;color:#3353b5;font-family:'Liberation Sans', sans-serif;font-weight:400;letter-spacing:-0.109px;">Suspend</div>
<div class="t" style="left:2099.00px;top:622.65px;font-size:29.00px;line-height:29.00px;color:#2d3748;font-family:'Liberation Sans', sans-serif;font-weight:400;letter-spacing:-0.335px;">Sleep</div>
<div class="t" style="left:2237.80px;top:622.65px;font-size:29.00px;line-height:29.00px;color:#2d3748;font-family:'Liberation Sans', sans-serif;font-weight:400;letter-spacing:0.271px;">Mock</div>
<div class="t" style="left:2374.20px;top:622.65px;font-size:29.00px;line-height:29.00px;color:#2d3748;font-family:'Liberation Sans', sans-serif;font-weight:400;letter-spacing:0.214px;">Shared Directory</div>
<div class="b" style="left:1886.00px;top:665.00px;width:180.00px;height:4.50px;background:#3b4353"></div>
<div class="t" style="left:1243.80px;top:717.51px;font-size:32.00px;line-height:32.00px;color:#283141;font-family:'Liberation Sans', sans-serif;font-weight:700;letter-spacing:0.271px;">Suspend/Approval/Prompt</div>
<svg class="i" style="left:1666.60px;top:720.00px;width:28.00px;height:28.00px;" viewBox="0 0 24 24" fill="none" stroke="#4a5568" stroke-width="1.8" stroke-linecap="round" stroke-linejoin="round"><circle cx="12" cy="12" r="10"/><path d="M12 16v-4"/><path d="M12 8h.01"/></svg>
<div class="b" style="left:1735.80px;top:703.80px;width:381.20px;height:59.40px;background:#fff;border:2.00px solid #e2e4e9;border-radius:12.00px"></div>
<div class="t" style="left:1761.80px;top:721.15px;font-size:24.40px;line-height:24.40px;color:#283141;font-family:'Liberation Sans', sans-serif;font-weight:700;letter-spacing:-0.115px;">Approval/Prompt helpers</div>
<svg class="i" style="left:2066.00px;top:721.00px;width:26.00px;height:26.00px;" viewBox="0 0 24 24" fill="none" stroke="#1f2937" stroke-width="1.8" stroke-linecap="round" stroke-linejoin="round"><circle cx="12" cy="12" r="10"/><path d="M9.09 9a3 3 0 0 1 5.83 1c0 2-3 3-3 3"/><path d="M12 17h.01"/></svg>
<div class="b" style="left:1242.70px;top:780.00px;width:88.10px;height:48.00px;background:#3c62e0;border-radius:24.00px"></div>
<div class="b" style="left:1286.80px;top:784.40px;width:39.60px;height:39.20px;background:#fff;border-radius:50%"></div>
<div class="t" style="left:1347.50px;top:789.85px;font-size:29.00px;line-height:29.00px;color:#2d3748;font-family:'Liberation Sans', sans-serif;font-weight:400;letter-spacing:0.600px;-webkit-text-stroke:0.50px #2d3748">Suspend flow execution until events/approvals received</div>
<div class="t" style="left:1275.80px;top:860.39px;font-size:26.00px;line-height:26.00px;color:#2d3748;font-family:'Liberation Sans', sans-serif;font-weight:400;letter-spacing:-1.398px;">Core</div>
<div class="t" style="left:1393.20px;top:860.39px;font-size:26.00px;line-height:26.00px;color:#2d3748;font-family:'Liberation Sans', sans-serif;font-weight:400;letter-spacing:-1.566px;">Form</div>
<div class="t" style="left:1514.40px;top:860.39px;font-size:26.00px;line-height:26.00px;color:#2d3748;font-family:'Liberation Sans', sans-serif;font-weight:400;letter-spacing:-0.649px;">Permissions</div>
<div class="b" style="left:1242.70px;top:910.00px;width:1605.10px;height:2.00px;background:#e3e5e9"></div>
<div class="b" style="left:1242.70px;top:905.80px;width:118.30px;height:4.20px;background:#3b4353"></div>
<div class="t" style="left:1243.80px;top:954.25px;font-size:29.00px;line-height:29.00px;color:#475467;font-family:'Liberation Sans', sans-serif;font-weight:400;letter-spacing:0.409px;">Number of approvals/events required for resuming flow</div>
<div class="b" style="left:1243.80px;top:993.20px;width:1603.00px;height:68.20px;background:#fff;border:2.00px solid #d4d7dd;border-radius:12.00px;box-shadow:0 2.00px 4.00px rgba(0,0,0,.05)"></div>
<div class="t" style="left:1261.20px;top:1012.85px;font-size:29.00px;line-height:29.00px;color:#1f2937;font-family:'Liberation Sans', sans-serif;font-weight:400;letter-spacing:0.000px;">1</div>
<div class="b" style="left:1229.20px;top:1082.00px;width:1056.80px;height:206.40px;background:#f5faf6;border:3.00px solid #2e7d32"></div>
<div class="t" style="left:1243.80px;top:1104.25px;font-size:29.00px;line-height:29.00px;color:#475467;font-family:'Liberation Sans', sans-serif;font-weight:400;letter-spacing:0.234px;">Timeout</div>
<div class="t" style="left:1770.50px;top:1163.82px;font-size:23.60px;line-height:23.60px;color:#283141;font-family:'Liberation Sans', sans-serif;font-weight:400;letter-spacing:0.000px;-webkit-text-stroke:0.40px #283141">Sec</div>
<div class="t" style="left:1899.00px;top:1163.82px;font-size:23.60px;line-height:23.60px;color:#283141;font-family:'Liberation Sans', sans-serif;font-weight:400;letter-spacing:0.000px;-webkit-text-stroke:0.40px #283141">Min</div>
<div class="t" style="left:2027.60px;top:1163.82px;font-size:23.60px;line-height:23.60px;color:#283141;font-family:'Liberation Sans', sans-serif;font-weight:400;letter-spacing:0.000px;-webkit-text-stroke:0.40px #283141">Hour</div>
<div class="t" style="left:2155.40px;top:1163.82px;font-size:23.60px;line-height:23.60px;color:#283141;font-family:'Liberation Sans', sans-serif;font-weight:400;letter-spacing:0.000px;-webkit-text-stroke:0.40px #283141">Day</div>
<div class="b" style="left:1243.80px;top:1190.80px;width:493.20px;height:67.60px;background:#f5faf6;border:2.00px solid #d4d7dd;border-radius:12.00px;box-shadow:0 2.00px 4.00px rgba(0,0,0,.05)"></div>
<div class="t" style="left:1261.20px;top:1210.65px;font-size:29.00px;line-height:29.00px;color:#1f2937;font-family:'Liberation Sans', sans-serif;font-weight:400;letter-spacing:0.183px;">1800 seconds</div>
<div class="b" style="left:1770.50px;top:1190.80px;width:111.10px;height:67.60px;background:#f5faf6;border:2.00px solid #d4d7dd;border-radius:12.00px;box-shadow:0 2.00px 4.00px rgba(0,0,0,.05)"></div>
<div class="b" style="left:1899.00px;top:1190.80px;width:110.40px;height:67.60px;background:#f5faf6;border:2.00px solid #d4d7dd;border-radius:12.00px;box-shadow:0 2.00px 4.00px rgba(0,0,0,.05)"></div>
<div class="b" style="left:2027.60px;top:1190.80px;width:110.40px;height:67.60px;background:#f5faf6;border:2.00px solid #d4d7dd;border-radius:12.00px;box-shadow:0 2.00px 4.00px rgba(0,0,0,.05)"></div>
<div class="b" style="left:2155.40px;top:1190.80px;width:110.40px;height:67.60px;background:#f5faf6;border:2.00px solid #d4d7dd;border-radius:12.00px;box-shadow:0 2.00px 4.00px rgba(0,0,0,.05)"></div>
<div class="t" style="left:1917.20px;top:1210.65px;font-size:29.00px;line-height:29.00px;color:#1f2937;font-family:'Liberation Sans', sans-serif;font-weight:400;letter-spacing:0.000px;">30</div>
</body></html>
